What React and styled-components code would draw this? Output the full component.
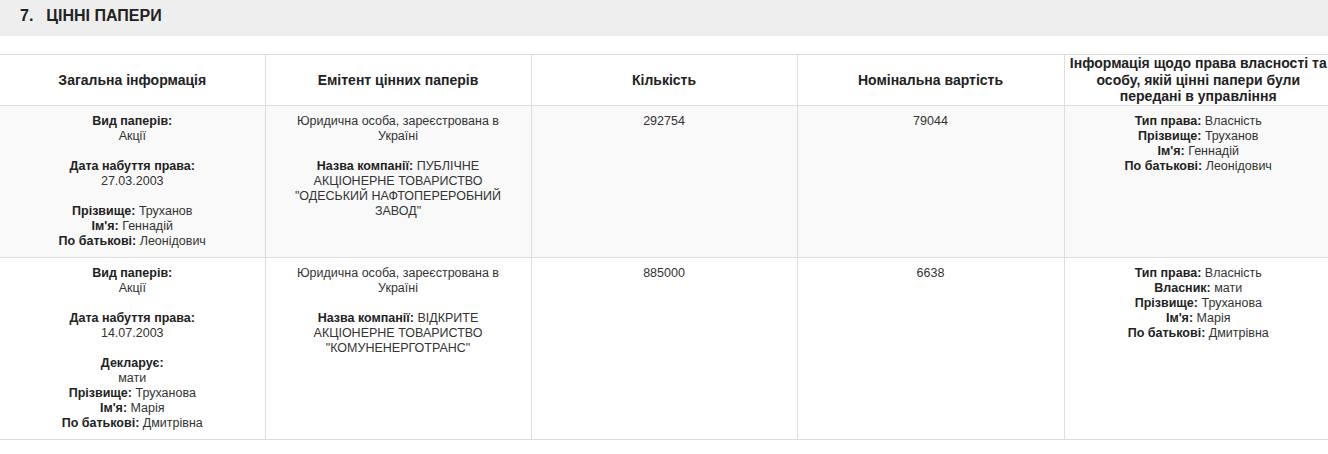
import styled, { createGlobalStyle } from 'styled-components';

const Global = createGlobalStyle`
  body {
    margin: 0;
    background: #fff;
    overflow: hidden;
    font-family: 'Liberation Sans', Arial, sans-serif;
  }
`;

const Page = styled.div`
  width: 1328px;
  overflow: hidden;
`;

const SectionBar = styled.h2`
  margin: 0;
  height: 36px;
  background: #eeeeee;
  display: flex;
  align-items: center;
  gap: 13px;
  padding: 0 0 5px 20px;
  box-sizing: border-box;
  font-size: 16px;
  font-weight: bold;
  color: #222;
`;

const Table = styled.table`
  margin-top: 18px;
  width: 1332px;
  table-layout: fixed;
  border-collapse: collapse;
  font-size: 12.5px;
  color: #333;
`;

const Th = styled.th`
  border-top: 1px solid #ddd;
  border-left: ${({ $first }) => ($first ? 'none' : '1px solid #ddd')};
  padding: 0 2px;
  height: 50px;
  font-size: 14px;
  line-height: 16.5px;
  font-weight: bold;
  color: #222;
  text-align: center;
  vertical-align: middle;
`;

const Row = styled.tr`
  background: ${({ $striped }) => ($striped ? '#f9f9f9' : '#fff')};
`;

const Td = styled.td`
  border-top: 1px solid #ddd;
  border-bottom: 1px solid #ddd;
  border-left: ${({ $first }) => ($first ? 'none' : '1px solid #ddd')};
  padding: 8px 20px 8px;
  line-height: 15px;
  text-align: center;
  vertical-align: top;
`;

const Group = styled.div`
  & + & {
    margin-top: 15px;
  }
`;

const Label = styled.b`
  color: #222;
`;

const Field = ({ label, value, inline }) => (
  <div>
    <Label>{label}</Label>
    {inline ? ' ' : <br />}
    {value}
  </div>
);

const columns = [
  'Загальна інформація',
  'Емітент цінних паперів',
  'Кількість',
  'Номінальна вартість',
  'Інформація щодо права власності та особу, якій цінні папери були передані в управління',
];

const widths = [265, 266, 266, 267, 268];

const rows = [
  {
    general: [
      [['Вид паперів:', 'Акції']],
      [['Дата набуття права:', '27.03.2003']],
      [
        ['Прізвище:', 'Труханов', true],
        ["Ім'я:", 'Геннадій', true],
        ['По батькові:', 'Леонідович', true],
      ],
    ],
    company: 'ПУБЛІЧНЕ АКЦІОНЕРНЕ ТОВАРИСТВО "ОДЕСЬКИЙ НАФТОПЕРЕРОБНИЙ ЗАВОД"',
    amount: '292754',
    nominal: '79044',
    owner: [
      ['Тип права:', 'Власність'],
      ['Прізвище:', 'Труханов'],
      ["Ім'я:", 'Геннадій'],
      ['По батькові:', 'Леонідович'],
    ],
  },
  {
    general: [
      [['Вид паперів:', 'Акції']],
      [['Дата набуття права:', '14.07.2003']],
      [
        ['Декларує:', 'мати'],
        ['Прізвище:', 'Труханова', true],
        ["Ім'я:", 'Марія', true],
        ['По батькові:', 'Дмитрівна', true],
      ],
    ],
    company: 'ВІДКРИТЕ АКЦІОНЕРНЕ ТОВАРИСТВО "КОМУНЕНЕРГОТРАНС"',
    amount: '885000',
    nominal: '6638',
    owner: [
      ['Тип права:', 'Власність'],
      ['Власник:', 'мати'],
      ['Прізвище:', 'Труханова'],
      ["Ім'я:", 'Марія'],
      ['По батькові:', 'Дмитрівна'],
    ],
  },
];

function App() {
  return (
    <Page>
      <Global />
      <SectionBar>
        <span>7.</span>
        <span>ЦІННІ ПАПЕРИ</span>
      </SectionBar>
      <Table>
        <colgroup>
          {widths.map((w, i) => (
            <col key={i} style={{ width: w }} />
          ))}
        </colgroup>
        <thead>
          <tr>
            {columns.map((c, i) => (
              <Th key={c} $first={i === 0}>
                {c}
              </Th>
            ))}
          </tr>
        </thead>
        <tbody>
          {rows.map((r, i) => (
            <Row key={i} $striped={i === 0}>
              <Td $first>
                {r.general.map((g, j) => (
                  <Group key={j}>
                    {g.map(([l, v, inline]) => (
                      <Field key={l} label={l} value={v} inline={inline} />
                    ))}
                  </Group>
                ))}
              </Td>
              <Td>
                <Group>Юридична особа, зареєстрована в Україні</Group>
                <Group>
                  <Label>Назва компанії:</Label> {r.company}
                </Group>
              </Td>
              <Td>{r.amount}</Td>
              <Td>{r.nominal}</Td>
              <Td>
                {r.owner.map(([l, v]) => (
                  <Field key={l} label={l} value={v} inline />
                ))}
              </Td>
            </Row>
          ))}
        </tbody>
      </Table>
    </Page>
  );
}

export default App;
